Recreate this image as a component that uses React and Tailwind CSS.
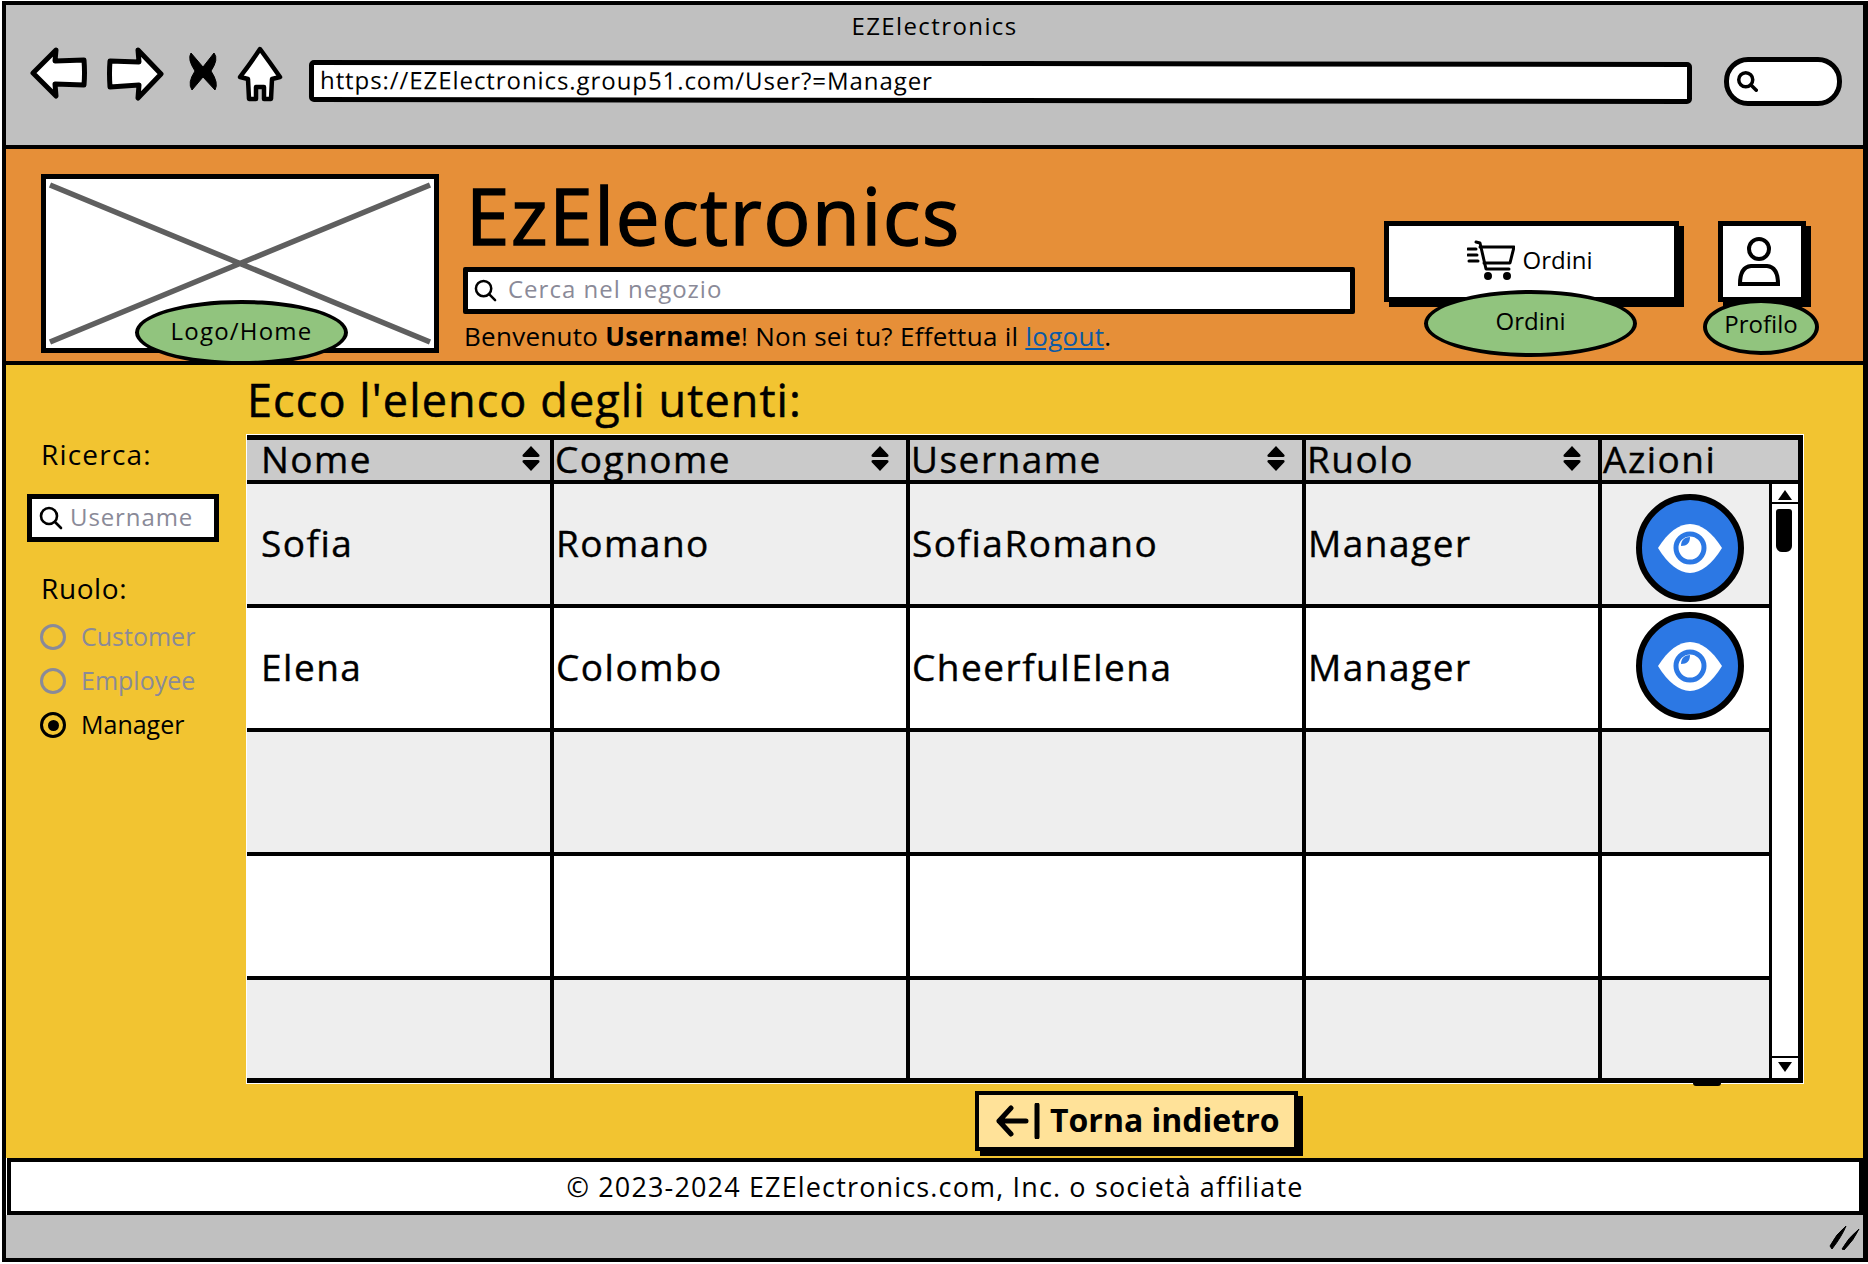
import React from "react";

const cols = "grid grid-cols-[303px_356px_396px_296px_1fr]";
const rows = [
  { bg: "bg-[#eeeeee]", h: "h-[124px]", c: ["Sofia", "Romano", "SofiaRomano", "Manager"], eye: "mt-[8px]" },
  { bg: "bg-white", h: "h-[124px]", c: ["Elena", "Colombo", "CheerfulElena", "Manager"], eye: "mb-[5px]" },
  { bg: "bg-[#eeeeee]", h: "h-[124px]", c: ["", "", "", ""] },
  { bg: "bg-white", h: "h-[124px]", c: ["", "", "", ""] },
  { bg: "bg-[#eeeeee]", h: "h-[98px]", c: ["", "", "", ""], last: true },
];
const heads = [
  ["Nome", "pr-[9px]"],
  ["Cognome", "pr-[16px]"],
  ["Username", "pr-[16px]"],
  ["Ruolo", "pr-[16px]"],
  ["Azioni", ""],
];

function Sort() {
  return (
    <svg width="20" height="27" viewBox="0 0 20 27" className="shrink-0">
      <path d="M10 1 L18.5 10 Q19 12 17 12 H3 Q1 12 1.5 10 Z M3 15 H17 Q19 15 18.5 17 L10 26 L1.5 17 Q1 15 3 15 Z" fill="#000" />
    </svg>
  );
}

function Search({ size = 24, sw = 2.6 }) {
  return (
    <svg width={size} height={size} viewBox="0 0 24 24" fill="none" stroke="#000" strokeWidth={sw} strokeLinecap="round" className="shrink-0">
      <circle cx="10" cy="10" r="8" />
      <path d="M16 16 L22 22" />
    </svg>
  );
}

function Eye({ cls }) {
  return (
    <svg width="108" height="108" viewBox="0 0 108 108" className={`block ${cls}`}>
      <circle cx="54" cy="54" r="51" fill="#2c78e4" stroke="#000" strokeWidth="6" />
      <path d="M22 54 C32 38 43 30 54 30 C65 30 76 38 86 54 C76 70 65 79 54 79 C43 79 32 70 22 54 Z" fill="#fff" />
      <circle cx="54" cy="54" r="14" fill="#fff" stroke="#2c78e4" strokeWidth="5" />
      <path d="M45 52 C45 46 49 43 54 43 C54 49 51 52 45 52 Z" fill="#2c78e4" />
    </svg>
  );
}

function Radio({ label, on }) {
  return (
    <div className="flex items-center h-[44px]">
      <span className={`w-[26px] h-[26px] rounded-full border-[3px] flex items-center justify-center ${on ? "border-black" : "border-[#8a8a98]"}`}>
        {on && <span className="w-[11px] h-[11px] rounded-full bg-black" />}
      </span>
      <span className={`ml-[15px] text-[25px] leading-none pb-[2px] ${on ? "text-black" : "text-[#8a8a98]"}`}>{label}</span>
    </div>
  );
}

export default function App() {
  return (
    <div className="w-[1868px] h-[1264px] bg-white pt-px pl-[2px] font-['Open_Sans',sans-serif] text-black overflow-hidden">
      <div className="w-[1866px] h-[1261px] border-l-4 border-r-[5px] border-y-4 border-black flex flex-col">
        {/* browser chrome */}
        <div className="h-[144px] shrink-0 bg-[#c0c0c0] border-b-4 border-black">
          <div className="h-[41px] flex items-center justify-center text-[24px] leading-none tracking-[1.4px]">EZElectronics</div>
          <div className="flex items-start pl-[24px]">
            <svg width="58" height="52" viewBox="0 0 58 52" className="shrink-0 mt-[1px]">
              <path d="M26 3 L3 26 L26 49 L25 37 L54 38 Q55 26 54 13 L25 14 Z" fill="#fff" stroke="#000" strokeWidth="5" strokeLinejoin="round" />
            </svg>
            <svg width="58" height="54" viewBox="0 0 58 54" className="shrink-0 ml-[18px] mt-[1px]">
              <path d="M32 3 L55 27 L32 51 L33 38 L4 40 Q3 26 4 14 L33 15 Z" fill="#fff" stroke="#000" strokeWidth="5" strokeLinejoin="round" />
            </svg>
            <svg width="32" height="40" viewBox="0 0 32 40" className="shrink-0 ml-[23px] mt-[5px]">
              <path d="M4 2 L16 16 L27 2 Q32 8 24 20 Q32 32 28 39 L16 26 L5 39 Q0 32 8 20 Q0 8 4 2 Z" fill="#000" stroke="#000" strokeWidth="1" />
            </svg>
            <svg width="46" height="56" viewBox="0 0 46 56" className="shrink-0 ml-[18px]">
              <path d="M23 3 Q34 18 43 31 L35 33 L34 53 L27 53 L27 41 L19 41 L19 53 L12 53 L11 33 L3 31 Q13 18 23 3 Z" fill="#fff" stroke="#000" strokeWidth="4.5" strokeLinejoin="round" />
            </svg>
            <div className="ml-[26px] mt-[15px] w-[1383px] h-[42px] bg-white border-[5px] border-black rounded-[5px] rotate-[0.08deg] flex items-center pl-[6px] pb-[2px] text-[24px] leading-none whitespace-nowrap tracking-[0.93px]">
              https://EZElectronics.group51.com/User?=Manager
            </div>
            <div className="ml-[32px] mt-[11px] w-[118px] h-[49px] bg-white border-[5px] border-black rounded-[24px] flex items-center pl-[8px]">
              <Search size={21} sw={4} />
            </div>
          </div>
        </div>

        {/* header */}
        <div className="h-[216px] shrink-0 bg-[#e68f38] border-b-4 border-black flex items-start pl-[35px] pt-[25px]">
          <div className="relative w-[398px] h-[179px] bg-white border-[5px] border-black shrink-0">
            <svg width="388" height="169" viewBox="0 0 388 169" className="block">
              <path d="M4 6 L384 163 M384 6 L4 163" stroke="#5f5f5f" strokeWidth="5.5" />
            </svg>
            <div className="absolute left-[89px] top-[121px] w-[213px] h-[65px] rounded-[50%] bg-[#91c47e] border-[4px] border-black flex items-center justify-center text-[24px] leading-none tracking-[1.2px] pb-[3px]">
              Logo/Home
            </div>
          </div>
          <div className="ml-[24px] w-[892px] shrink-0 flex flex-col">
            <div className="h-[93px] pt-[2px] pl-[3px] text-[78px] leading-[78px] font-normal [-webkit-text-stroke:1.5px_#000] tracking-[1.7px]">EzElectronics</div>
            <div className="h-[47px] bg-white border-[5px] border-black rounded-[2px] flex items-center pl-[6px]">
              <Search size={23} />
              <span className="ml-[11px] text-[24px] leading-none text-[#8a8a98] pb-[3px] tracking-[1px]">Cerca nel negozio</span>
            </div>
            <div className="mt-[7px] text-[26px] leading-[30px] whitespace-nowrap tracking-[0.28px] pl-[1px]">
              Benvenuto <b>Username</b>! Non sei tu? Effettua il <a className="text-[#0b5aa5] underline underline-offset-2">logout</a>.
            </div>
          </div>
          <div className="relative ml-[29px] mt-[47px] w-[295px] h-[81px] bg-white border-[5px] border-black shadow-[5px_5px_0_#000] flex items-center justify-center pr-[4px] shrink-0">
            <svg width="48" height="40" viewBox="0 0 48 40" className="shrink-0 mr-[8px] mb-[4px]" fill="none" stroke="#000" strokeWidth="3" strokeLinecap="round" strokeLinejoin="round">
              <path d="M9 2 L13 3 L19 29 H42" />
              <path d="M13 7 H47 L43 23 H17" />
              <path d="M1 9 H9 M1 15 H10 M2 21 H11" />
              <circle cx="21" cy="36" r="2.5" fill="#000" />
              <circle cx="40" cy="36" r="2.5" fill="#000" />
            </svg>
            <span className="text-[24px] leading-none pb-[3px]">Ordini</span>
            <div className="absolute left-[35px] top-[64px] w-[213px] h-[67px] rounded-[50%] bg-[#91c47e] border-[4px] border-black flex items-center justify-center text-[24px] leading-none pb-[5px]">
              Ordini
            </div>
          </div>
          <div className="relative ml-[39px] mt-[47px] w-[88px] h-[81px] bg-white border-[5px] border-black shadow-[5px_5px_0_#000] flex items-center justify-center pr-[6px] shrink-0">
            <svg width="44" height="50" viewBox="0 0 44 50" fill="none" stroke="#000" strokeWidth="4" className="mt-[1px]">
              <circle cx="22" cy="12" r="10" />
              <path d="M3 47 Q3 30 14 29 H30 Q41 30 41 47 Z" />
            </svg>
            <div className="absolute left-[-20px] top-[73px] w-[116px] h-[56px] rounded-[50%] bg-[#91c47e] border-[4px] border-black flex items-center justify-center text-[24px] leading-none pb-[6px]">
              Profilo
            </div>
          </div>
        </div>

        {/* main */}
        <div className="h-[793px] shrink-0 bg-[#f2c431] flex items-start">
          <aside className="w-[241px] shrink-0 pl-[21px] pt-[74px]">
            <div className="pl-[14px] text-[28px] leading-[30px] tracking-[1.2px]">Ricerca:</div>
            <div className="mt-[25px] w-[192px] h-[48px] bg-white border-[5px] border-black flex items-center pl-[7px]">
              <Search size={24} />
              <span className="ml-[7px] text-[24px] leading-none text-[#8a8a98] pb-[3px] tracking-[0.9px]">Username</span>
            </div>
            <div className="mt-[31px] pl-[14px] text-[28px] leading-[30px] tracking-[0.6px]">Ruolo:</div>
            <div className="mt-[12px] pl-[13px] flex flex-col">
              <Radio label="Customer" />
              <Radio label="Employee" />
              <Radio label="Manager" on />
            </div>
          </aside>

          <section className="w-[1570px] shrink-0">
            <h1 className="h-[70px] pt-[10px] text-[45px] leading-[50px] font-normal tracking-[1.1px] [-webkit-text-stroke:0.5px_#000]">Ecco l'elenco degli utenti:</h1>
            <div className="relative w-[1556px] h-[648px] border-[5px] border-black outline outline-1 outline-white bg-white">
              <div className={`${cols} h-[44px] ml-[-5px] bg-[#cacaca] border-b-4 border-black text-[37px] leading-none tracking-[1.5px] [-webkit-text-stroke:0.4px_#000]`}>
                {heads.map(([t, pr], i) => (
                  <div key={t} className={`flex items-center justify-between pb-[5px] ${i ? "border-l-[4px] border-black pl-[1px]" : "pl-[14px]"} ${pr}`}>
                    <span>{t}</span>
                    {i < 4 && <Sort />}
                  </div>
                ))}
              </div>
              <div className="flex ml-[-5px] h-[594px]">
                <div className="w-[1522px] shrink-0">
                  {rows.map((r, i) => (
                    <div key={i} className={`${cols} ${r.h} ${r.bg} ${r.last ? "" : "border-b-4 border-black"} text-[37px] leading-none tracking-[1.5px] [-webkit-text-stroke:0.4px_#000]`}>
                      {r.c.map((t, j) => (
                        <div key={j} className={`flex items-center pb-[4px] ${j ? "border-l-[4px] border-black pl-[2px]" : "pl-[14px]"}`}>{t}</div>
                      ))}
                      <div className="border-l-[4px] border-black flex items-center pl-[34px]">
                        {r.eye && <Eye cls={r.eye} />}
                      </div>
                    </div>
                  ))}
                </div>
                <div className="flex-1 border-l-[3px] border-black bg-white flex flex-col justify-between pb-[3px]">
                  <div>
                    <div className="h-[17px] mt-[3px] border-b-2 border-black flex items-center justify-center">
                      <span className="w-0 h-0 border-x-[7px] border-x-transparent border-b-[10px] border-b-black" />
                    </div>
                    <div className="w-[16px] h-[43px] mt-[5px] ml-[4px] bg-black rounded-b-[6px] rounded-t-[3px]" />
                  </div>
                  <div className="h-[19px] border-t-2 border-black flex items-center justify-center">
                    <span className="w-0 h-0 border-x-[7px] border-x-transparent border-t-[10px] border-t-black" />
                  </div>
                </div>
              </div>
              <span className="absolute left-[1441px] top-[643px] w-[28px] h-[3px] bg-black rounded-b-full" />
            </div>
            <div className="ml-[728px] mt-[8px] w-[323px] h-[60px] bg-[#ffe299] border-[4px] border-black shadow-[5px_5px_0_#000] flex items-center pl-[17px]">
              <svg width="44" height="36" viewBox="0 0 44 36" fill="none" stroke="#000" strokeWidth="5" strokeLinecap="round" strokeLinejoin="round" className="shrink-0">
                <path d="M15 5 L3 18 L15 31 M3 18 H30 M41 2 V34" />
              </svg>
              <span className="ml-[10px] text-[32px] leading-none font-bold pb-[3px]">Torna indietro</span>
            </div>
          </section>
        </div>

        {/* footer */}
        <div className="h-[57px] shrink-0 bg-white border-[4px] border-black ml-[1px] flex items-center justify-center text-[27px] leading-none tracking-[1.15px]">
          © 2023-2024 EZElectronics.com, Inc. o società affiliate
        </div>
        <div className="h-[43px] shrink-0 bg-[#c0c0c0] flex items-center justify-end pr-[3px]">
          <svg width="32" height="26" viewBox="0 0 32 26" fill="#000">
            <path d="M2 22 Q8 10 18 2 Q14 12 4 25 Z M14 25 Q20 14 31 5 Q26 16 16 26 Z" stroke="#000" strokeWidth="1" />
          </svg>
        </div>
      </div>
    </div>
  );
}
